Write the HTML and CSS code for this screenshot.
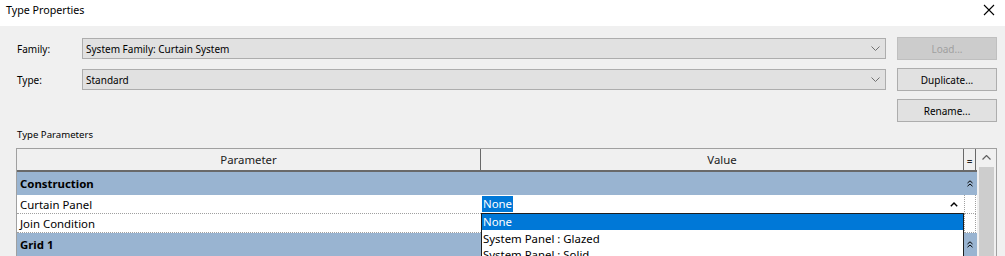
FILE: index.html
```html
<!DOCTYPE html>
<html lang="en">
  <head>
    <meta charset="UTF-8" />
    <title>Type Properties</title>
    <link rel="stylesheet" href="styles.css">
  </head>
  <body>
    <!-- Title Bar -->
    <div class="titlebar">
      <span class="title">Type Properties</span>
      <svg class="close" width="12" height="12" viewBox="0 0 12 12">
        <path d="M1 1 L11 11 M11 1 L1 11" stroke="#000" stroke-width="1.1" fill="none" />
      </svg>
    </div>

    <div class="dialog">
      <!-- Family / Type selectors -->
      <div class="selectors">
        <label class="field-label">Family:</label>
        <div class="combo">
          <span>System Family: Curtain System</span>
          <svg width="9" height="5" viewBox="0 0 9 5"><path d="M0.5 0.5 L4.5 4.5 L8.5 0.5" stroke="#707070" fill="none" /></svg>
        </div>
        <button class="btn disabled">Load...</button>

        <label class="field-label">Type:</label>
        <div class="combo">
          <span>Standard</span>
          <svg width="9" height="5" viewBox="0 0 9 5"><path d="M0.5 0.5 L4.5 4.5 L8.5 0.5" stroke="#707070" fill="none" /></svg>
        </div>
        <button class="btn">Duplicate...</button>

        <span></span>
        <span></span>
        <button class="btn">Rename...</button>
      </div>

      <div class="section-label">Type Parameters</div>

      <!-- Parameters Grid -->
      <div class="params">
        <div class="grid">
          <div class="row head">
            <div class="cell">Parameter</div>
            <div class="cell">Value</div>
            <div class="cell eq">=</div>
          </div>

          <div class="row group">
            <div class="cell span">Construction</div>
            <div class="cell eq"><svg width="6" height="7" viewBox="0 0 6 7"><path d="M0.5 3 L3 0.8 L5.5 3 M0.5 6.2 L3 4 L5.5 6.2" stroke="#000" fill="none" /></svg></div>
          </div>

          <div class="row item">
            <div class="cell">Curtain Panel</div>
            <div class="cell value">
              <span class="selected-text">None</span>
              <svg width="8" height="5" viewBox="0 0 8 5"><path d="M0.8 4.2 L4 1 L7.2 4.2" stroke="#000" stroke-width="1.4" fill="none" /></svg>
            </div>
            <div class="cell eq"></div>
          </div>

          <div class="row item">
            <div class="cell">Join Condition</div>
            <div class="cell"></div>
            <div class="cell eq"></div>
          </div>

          <div class="row group">
            <div class="cell span">Grid 1</div>
            <div class="cell eq"><svg width="6" height="7" viewBox="0 0 6 7"><path d="M0.5 3 L3 0.8 L5.5 3 M0.5 6.2 L3 4 L5.5 6.2" stroke="#000" fill="none" /></svg></div>
          </div>

          <!-- Open dropdown list -->
          <div class="dropdown">
            <div class="option active">None</div>
            <div class="option">System Panel : Glazed</div>
            <div class="option">System Panel : Solid</div>
          </div>
        </div>

        <div class="scrollbar">
          <svg class="arrow" width="9" height="5" viewBox="0 0 9 5"><path d="M0.5 4.5 L4.5 0.5 L8.5 4.5" stroke="#606060" stroke-width="1.2" fill="none" /></svg>
          <div class="thumb"></div>
        </div>
      </div>
    </div>
  </body>
</html>
```

FILE: styles.css
```css
/* Global Reset */
* {
  margin: 0;
  padding: 0;
  box-sizing: border-box;
}

body {
  font-family: "Noto Sans", "Open Sans", sans-serif;
  font-size: 10px;
  color: #000;
  background-color: #f0f0f0;
  width: 1005px;
  height: 256px;
  overflow: hidden;
}

/* Title Bar */
.titlebar {
  height: 26px;
  background-color: #fff;
  display: flex;
  align-items: center;
  justify-content: space-between;
  padding: 0 10px 6px 6px;
}

.title {
  font-size: 10.7px;
}

/* Dialog Body */
.dialog {
  padding: 11px 8px 0 16px;
}

.selectors {
  display: grid;
  grid-template-columns: 66px 804px 111px;
  row-gap: 8px;
  align-items: center;
}

.field-label {
  padding-left: 1px;
}

.combo {
  height: 21px;
  background-color: #e1e1e1;
  border: 1px solid #adadad;
  display: flex;
  align-items: center;
  justify-content: space-between;
  padding: 0 5px 0 3px;
}

.btn {
  height: 23px;
  margin-left: 11px;
  font-family: inherit;
  font-size: 10px;
  background-color: #e1e1e1;
  border: 1px solid #adadad;
  color: #000;
}

.btn.disabled {
  background-color: #cccccc;
  border-color: #bfbfbf;
  color: #a0a0a0;
}

.section-label {
  margin-top: 6px;
  height: 20px;
  padding-left: 1px;
  font-size: 9.6px;
}

/* Parameters Grid */
.params {
  width: 981px;
  height: 120px;
  border: 1px solid #a0a0a0;
  border-bottom: none;
  display: flex;
}

.grid {
  position: relative;
  width: 960px;
  font-size: 11.4px;
}

.row {
  display: grid;
  grid-template-columns: 464px 483px 12px;
}

.row .cell {
  display: flex;
  align-items: center;
  padding-left: 3px;
  white-space: nowrap;
}

.row.head {
  height: 23px;
  background-color: #f0f0f0;
  border-bottom: 2px solid #696969;
}

.row.head .cell {
  justify-content: center;
  padding-left: 0;
  color: #222;
  border-right: 1px solid #696969;
}

.row.head .cell.eq {
  border-right: 1px solid #696969;
  font-size: 10px;
  align-items: flex-end;
  padding-bottom: 2px;
}

.row.group {
  height: 23px;
  grid-template-columns: 947px 12px;
  background-color: #99b4d1;
  font-weight: bold;
}

.row.group .cell.eq {
  padding-left: 3px;
}

.row.item {
  height: 19px;
  background-color: #fff;
}

.row.item .cell {
  border-bottom: 1px dotted #a0a0a0;
}

.row.item .cell.eq {
  border: 1px dotted #a0a0a0;
  border-top: none;
  background-color: #fff;
}

.row.item .cell.value {
  padding-left: 1px;
  justify-content: space-between;
  padding-right: 6px;
}

.selected-text {
  background-color: #0078d7;
  color: #fff;
  padding: 0 1px;
  line-height: 16px;
}

.dropdown {
  position: absolute;
  left: 464px;
  top: 64px;
  width: 483px;
  height: 60px;
  background-color: #fff;
  border: 1px solid #1e1e1e;
  border-bottom: none;
}

.option {
  height: 16px;
  line-height: 16px;
  padding-left: 1px;
  white-space: nowrap;
}

.option.active {
  background-color: #0078d7;
  color: #fff;
  margin-bottom: 1px;
}

/* Scrollbar */
.scrollbar {
  width: 19px;
  background-color: #f0f0f0;
  display: flex;
  flex-direction: column;
  align-items: center;
  padding-top: 6px;
}

.scrollbar .arrow {
  margin-bottom: 7px;
}

.thumb {
  width: 15px;
  flex: 1;
  background-color: #cdcdcd;
}
```
